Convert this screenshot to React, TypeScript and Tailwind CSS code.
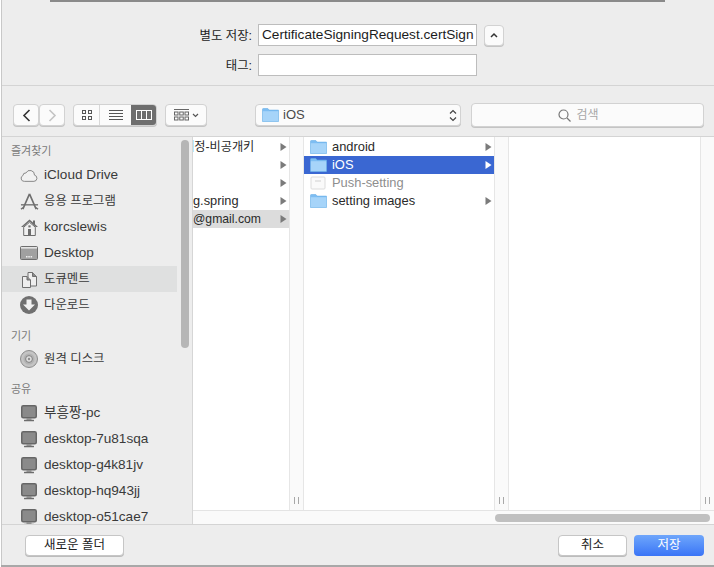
import React from "react";

const font = "font-['Liberation_Sans','Noto_Sans_CJK_KR',sans-serif]";

function Cloud() {
  return (
    <svg width="18" height="15" viewBox="0 0 20 16" fill="#f2f2f2" stroke="#7d7d7d" strokeWidth="1">
      <path d="M5 14.5h10.5a3.5 3.5 0 0 0 .6-6.9A5 5 0 0 0 6.6 5.2 3 3 0 0 0 3.3 8 3.4 3.4 0 0 0 5 14.5z" />
    </svg>
  );
}

function AppsIcon() {
  return (
    <svg width="19" height="19" viewBox="0 0 20 20" fill="none" stroke="#6f6f6f" strokeWidth="1.7">
      <path d="M10 2 3 18M10 2l7 16" />
      <path d="M1 13.5h18" strokeWidth="1.4" />
      <path d="M1 18l3-2M19 18l-3-2" strokeWidth="1.4" />
    </svg>
  );
}

function HomeIcon() {
  return (
    <svg width="19" height="19" viewBox="0 0 19 19">
      <path d="M9.5 1.5 1 9h2.2L9.5 3.6 15.8 9H18l-3-2.7V2.5h-2v2z" fill="#6d6d6d" />
      <path d="M3.7 9.2 9.5 4.3l5.8 4.9v8.3H3.7z" fill="#f0f0f0" stroke="#6d6d6d" />
      <rect x="8" y="11" width="3" height="6.5" fill="#6d6d6d" />
      <rect x="8.4" y="7.4" width="2.2" height="2" fill="#6d6d6d" />
    </svg>
  );
}

function DesktopIcon() {
  return (
    <svg width="18" height="14" viewBox="0 0 18 14">
      <rect x="0.5" y="0.5" width="17" height="13" rx="1" fill="#a0a0a0" stroke="#6e6e6e" />
      <rect x="1" y="1" width="16" height="1.6" fill="#e4e4e4" />
      <rect x="6" y="10" width="1.5" height="1.5" fill="#eee" />
      <rect x="8.3" y="10" width="1.5" height="1.5" fill="#eee" />
      <rect x="10.6" y="10" width="1.5" height="1.5" fill="#eee" />
    </svg>
  );
}

function DocsIcon() {
  return (
    <svg width="17" height="17" viewBox="0 0 17 17" stroke="#6f6f6f" fill="#eeeeee">
      <path d="M7 1.5h4.5l4 4v9.5H7z" />
      <path d="M11.5 1.5v4h4" fill="#8a8a8a" />
      <path d="M1.5 5.5H6l3.5 3.5v7.5h-8z" />
      <path d="M6 5.5V9h3.5" fill="#8a8a8a" />
    </svg>
  );
}

function DownloadIcon() {
  return (
    <svg width="18" height="18" viewBox="0 0 18 18">
      <circle cx="9" cy="9" r="9" fill="#707070" />
      <path d="M6.5 3.5h5v5H15L9 14.5 3 8.5h3.5z" fill="#f2f2f2" />
    </svg>
  );
}

function DiskIcon() {
  return (
    <svg width="18" height="18" viewBox="0 0 18 18">
      <circle cx="9" cy="9" r="8.5" fill="#c4c4c4" stroke="#8d8d8d" />
      <circle cx="9" cy="9" r="5.5" fill="#b3b3b3" />
      <circle cx="9" cy="9" r="3.4" fill="#dedede" stroke="#808080" />
      <circle cx="9" cy="9" r="1.2" fill="#8d8d8d" />
    </svg>
  );
}

function MonitorIcon() {
  return (
    <svg width="16" height="17" viewBox="0 0 16 17">
      <rect x="0.75" y="0.75" width="14.5" height="12" rx="1.5" fill="#8a8a8a" stroke="#666" strokeWidth="1.5" />
      <rect x="5.5" y="13.2" width="5" height="1.6" fill="#8a8a8a" />
      <rect x="3" y="14.8" width="10" height="1.4" rx="0.5" fill="#6c6c6c" />
    </svg>
  );
}

function Folder({ size = 17 }: { size?: number }) {
  return (
    <svg width={size} height={size - 3} viewBox="0 0 17 14" className="shrink-0">
      <path d="M0.5 13.5V1.2C0.5.8.8.5 1.2.5h4.6l1.4 1.6h9.3v11.4z" fill="#7dbdf2" stroke="#6aaee8" strokeWidth="0.6" />
      <rect x="0.8" y="3.2" width="15.4" height="10" fill="#a6d4f9" />
    </svg>
  );
}

function FileIcon() {
  return (
    <svg width="17" height="14" viewBox="0 0 17 14" className="shrink-0">
      <rect x="1" y="1" width="14" height="12" rx="1" fill="#fafafa" stroke="#dcdcdc" />
      <rect x="5" y="4.5" width="6" height="1" fill="#cfcfcf" />
    </svg>
  );
}

function Arrow({ color = "#7b7b7b" }: { color?: string }) {
  return (
    <svg width="7" height="8" viewBox="0 0 7 8" className="shrink-0">
      <path d="M0.5 0 6.5 4l-6 4z" fill={color} />
    </svg>
  );
}

function Handle() {
  return (
    <div className="relative flex w-[15px] shrink-0 items-end justify-center gap-[3px] border-x border-[#e6e6e6] bg-[#fafafa] pb-[6px]">
      <div className="h-[7px] w-px bg-[#a8a8a8]" />
      <div className="h-[7px] w-px bg-[#a8a8a8]" />
    </div>
  );
}

function SideHead({ text, className }: { text: string; className: string }) {
  return <div className={`pl-[9px] text-[11px] leading-[14px] text-[#7a7a7a] ${className}`}>{text}</div>;
}

function SideRow({ icon, label, active, ko }: { icon: React.ReactNode; label: string; active?: boolean; ko?: boolean }) {
  return (
    <div className={`flex h-[26px] w-[175px] shrink-0 items-center ${active ? "bg-[#dfe0e0]" : ""}`}>
      <div className="flex w-[42px] shrink-0 items-center justify-center pl-[16px] pr-[4px]">{icon}</div>
      <span className={`whitespace-nowrap text-[#3a3a3a] ${ko ? "text-[12.4px]" : "text-[13.6px]"}`}>{label}</span>
    </div>
  );
}

function FirstColRow({ label, active, arrow = true, textClass = "text-[12.8px]" }: { label?: string; active?: boolean; arrow?: boolean; textClass?: string }) {
  return (
    <div className={`flex h-[18px] items-center justify-between overflow-hidden pr-[2px] ${active ? "bg-[#dcdcdc]" : ""}`}>
      <span className={`whitespace-nowrap text-[#2a2a2a] ${textClass}`}>{label}</span>
      {arrow && <Arrow />}
    </div>
  );
}

function FileRow({ label, folder = true, selected, arrow = true }: { label: string; folder?: boolean; selected?: boolean; arrow?: boolean }) {
  return (
    <div className={`flex h-[18px] items-center pl-[6px] pr-[2px] ${selected ? "bg-[#3a67d2]" : ""}`}>
      {folder ? <Folder /> : <FileIcon />}
      <span className={`ml-[5px] flex-1 text-[12.9px] whitespace-nowrap ${selected ? "text-white" : folder ? "text-[#2a2a2a]" : "text-[#8e8e8e]"}`}>{label}</span>
      {arrow && <Arrow color={selected ? "#ffffff" : "#7b7b7b"} />}
    </div>
  );
}

const toolBtn = "flex items-center justify-center rounded-[4px] border border-[#d2d2d2] bg-[#fbfbfb] shadow-[0_1px_0_#c4c4c4]";

export default function App() {
  return (
    <div className={`flex h-[567px] w-[714px] flex-col overflow-hidden bg-white pl-px ${font}`}>
      <div className="flex h-[565px] flex-col border-l border-[#c8c8c8] bg-[#ededed]">
        <div className="h-[2px] shrink-0 pl-[48px]">
          <div className="h-full w-[615px] bg-[#8a8a8a]" />
        </div>

        {/* name + tags */}
        <div className="flex h-[84px] shrink-0 flex-col gap-[8px] border-b border-[#d4d4d4] pt-[22px] pl-[256px]">
          <div className="flex items-center">
            <div className="w-0">
              <div className="ml-[-80px] w-[74px] pt-[2px] text-right text-[12.4px] whitespace-nowrap text-[#222]">별도 저장:</div>
            </div>
            <div className="flex h-[22px] w-[219px] items-center overflow-hidden border border-[#bdbdbd] bg-white pt-[1px] pl-[3px] text-[13.65px] whitespace-nowrap text-[#1c1c1c]">
              CertificateSigningRequest.certSign
            </div>
            <div className={`ml-[7px] h-[21px] w-[20px] ${toolBtn}`}>
              <svg width="10" height="6" viewBox="0 0 10 6" fill="none" stroke="#333" strokeWidth="1.5">
                <path d="M2 5 5 2l3 3" />
              </svg>
            </div>
          </div>
          <div className="flex items-center">
            <div className="w-0">
              <div className="ml-[-80px] w-[74px] pt-[2px] text-right text-[12.4px] whitespace-nowrap text-[#222]">태그:</div>
            </div>
            <div className="h-[22px] w-[219px] border border-[#bdbdbd] bg-white" />
          </div>
        </div>

        {/* toolbar */}
        <div className="flex h-[51px] shrink-0 items-start border-b border-[#d4d4d4] pt-[18px] pl-[11px]">
          <div className={`h-[22px] w-[26px] ${toolBtn}`}>
            <svg width="9" height="13" viewBox="0 0 9 13" fill="none" stroke="#333" strokeWidth="1.6">
              <path d="M7.5 1 2 6.5 7.5 12" />
            </svg>
          </div>
          <div className={`h-[22px] w-[26px] ${toolBtn}`}>
            <svg width="9" height="13" viewBox="0 0 9 13" fill="none" stroke="#c4c4c4" strokeWidth="1.6">
              <path d="M1.5 1 7 6.5 1.5 12" />
            </svg>
          </div>

          <div className="ml-[8px] flex h-[22px] w-[84px] overflow-hidden rounded-[4px] border border-[#d2d2d2] bg-[#fbfbfb] shadow-[0_1px_0_#c4c4c4]">
            <div className="flex w-[26px] items-center justify-center border-r border-[#d8d8d8]">
              <svg width="10" height="10" viewBox="0 0 10 10" fill="none" stroke="#555">
                <rect x="0.5" y="0.5" width="3" height="3" />
                <rect x="6.5" y="0.5" width="3" height="3" />
                <rect x="0.5" y="6.5" width="3" height="3" />
                <rect x="6.5" y="6.5" width="3" height="3" />
              </svg>
            </div>
            <div className="flex w-[31px] items-center justify-center">
              <svg width="14" height="10" viewBox="0 0 14 10" stroke="#555">
                <path d="M0 .5h14M0 3.5h14M0 6.5h14M0 9.5h14" />
              </svg>
            </div>
            <div className="flex flex-1 items-center justify-center bg-[#6e6e6e]">
              <svg width="16" height="10" viewBox="0 0 16 10" fill="none" stroke="#fff">
                <rect x="0.5" y="0.5" width="15" height="9" />
                <path d="M5.5 0v10M10.5 0v10" />
              </svg>
            </div>
          </div>

          <div className={`ml-[8px] h-[22px] w-[42px] gap-[3px] ${toolBtn}`}>
            <svg width="15" height="12" viewBox="0 0 15 12" fill="none" stroke="#666">
              <path d="M0 .5h15" />
              <rect x="0.5" y="3" width="3.5" height="3" />
              <rect x="5.75" y="3" width="3.5" height="3" />
              <rect x="11" y="3" width="3.5" height="3" />
              <rect x="0.5" y="8" width="3.5" height="3" />
              <rect x="5.75" y="8" width="3.5" height="3" />
              <rect x="11" y="8" width="3.5" height="3" />
            </svg>
            <svg width="7" height="5" viewBox="0 0 7 5" fill="none" stroke="#555" strokeWidth="1.2">
              <path d="M1 1l2.5 2.5L6 1" />
            </svg>
          </div>

          <div className={`ml-[48px] h-[22px] w-[206px] justify-between! pr-[3px] pl-[6px] ${toolBtn}`}>
            <div className="flex items-center gap-[4px]">
              <Folder />
              <span className="text-[13px] text-[#4a4a4a]">iOS</span>
            </div>
            <svg width="8" height="13" viewBox="0 0 8 13" fill="none" stroke="#444" strokeWidth="1.2">
              <path d="M1 4.5 4 1.5l3 3M1 8.5l3 3 3-3" />
            </svg>
          </div>

          <div className={`mt-[-1px] ml-[10px] h-[24px] w-[233px] gap-[5px] pr-[18px] ${toolBtn}`}>
            <svg width="13" height="13" viewBox="0 0 13 13" fill="none" stroke="#777" strokeWidth="1.2">
              <circle cx="5.5" cy="5.5" r="4.5" />
              <path d="M9 9l3.5 3.5" />
            </svg>
            <span className="text-[12px] text-[#a8a8a8]">검색</span>
          </div>
        </div>

        {/* browser */}
        <div className="flex min-h-0 flex-1">
          <div className="relative w-[191px] shrink-0 overflow-hidden border-r border-[#d6d6d6]">
            <div className="flex flex-col">
              <SideHead text="즐겨찾기" className="mt-[7px] mb-[4px]" />
              <SideRow icon={<Cloud />} label="iCloud Drive" />
              <SideRow icon={<AppsIcon />} label="응용 프로그램" ko />
              <SideRow icon={<HomeIcon />} label="korcslewis" />
              <SideRow icon={<DesktopIcon />} label="Desktop" />
              <SideRow icon={<DocsIcon />} label="도큐멘트" active ko />
              <SideRow icon={<DownloadIcon />} label="다운로드" ko />
              <SideHead text="기기" className="mt-[11px] mb-[3px]" />
              <SideRow icon={<DiskIcon />} label="원격 디스크" ko />
              <SideHead text="공유" className="mt-[10px] mb-[4px]" />
              <SideRow icon={<MonitorIcon />} label="부흥짱-pc" />
              <SideRow icon={<MonitorIcon />} label="desktop-7u81sqa" />
              <SideRow icon={<MonitorIcon />} label="desktop-g4k81jv" />
              <SideRow icon={<MonitorIcon />} label="desktop-hq943jj" />
              <SideRow icon={<MonitorIcon />} label="desktop-o51cae7" />
            </div>
            <div className="absolute top-[3px] left-[179px] h-[208px] w-[8px] rounded-full bg-[#b6b6b6]" />
          </div>

          <div className="relative flex min-w-0 flex-1 flex-col overflow-hidden bg-white">
            <div className="flex min-h-0 flex-1">
              <div className="w-[96px] shrink-0 pt-[1px]">
                <FirstColRow label="계정-비공개키" textClass="ml-[-10px] text-[12.2px]" />
                <FirstColRow />
                <FirstColRow />
                <FirstColRow label="g.spring" />
                <FirstColRow label="@gmail.com" textClass="text-[12.2px]" active />
              </div>
              <Handle />
              <div className="w-[190px] shrink-0 pt-[1px]">
                <FileRow label="android" />
                <FileRow label="iOS" selected />
                <FileRow label="Push-setting" folder={false} arrow={false} />
                <FileRow label="setting images" />
              </div>
              <Handle />
              <div className="w-[191px] shrink-0" />
              <Handle />
            </div>
            <div className="flex h-[14px] shrink-0 items-center border-t border-[#e4e4e4] bg-[#fafafa] pl-[302px]">
              <div className="h-[8px] w-[215px] rounded-full bg-[#c0c0c0]" />
            </div>
          </div>
        </div>

        {/* footer */}
        <div className="flex h-[41px] shrink-0 items-start justify-between border-t border-[#d4d4d4] pt-[10px] pr-[10px] pl-[23px]">
          <div className="flex h-[21px] w-[99px] items-center justify-center rounded-[4px] border border-[#c6c6c6] bg-white text-[12.5px] text-[#222] shadow-[0_1px_0_#bcbcbc]">
            새로운 폴더
          </div>
          <div className="flex gap-[7px]">
            <div className="flex h-[21px] w-[69px] items-center justify-center rounded-[4px] border border-[#c6c6c6] bg-white text-[12.5px] text-[#222] shadow-[0_1px_0_#bcbcbc]">
              취소
            </div>
            <div className="flex h-[21px] w-[70px] items-center justify-center rounded-[4px] bg-linear-to-b from-[#6fa6fb] to-[#3a74f6] text-[12.5px] text-white">
              저장
            </div>
          </div>
        </div>
      </div>
      <div className="h-[2px] shrink-0 bg-[#a8a8a8]" />
    </div>
  );
}
